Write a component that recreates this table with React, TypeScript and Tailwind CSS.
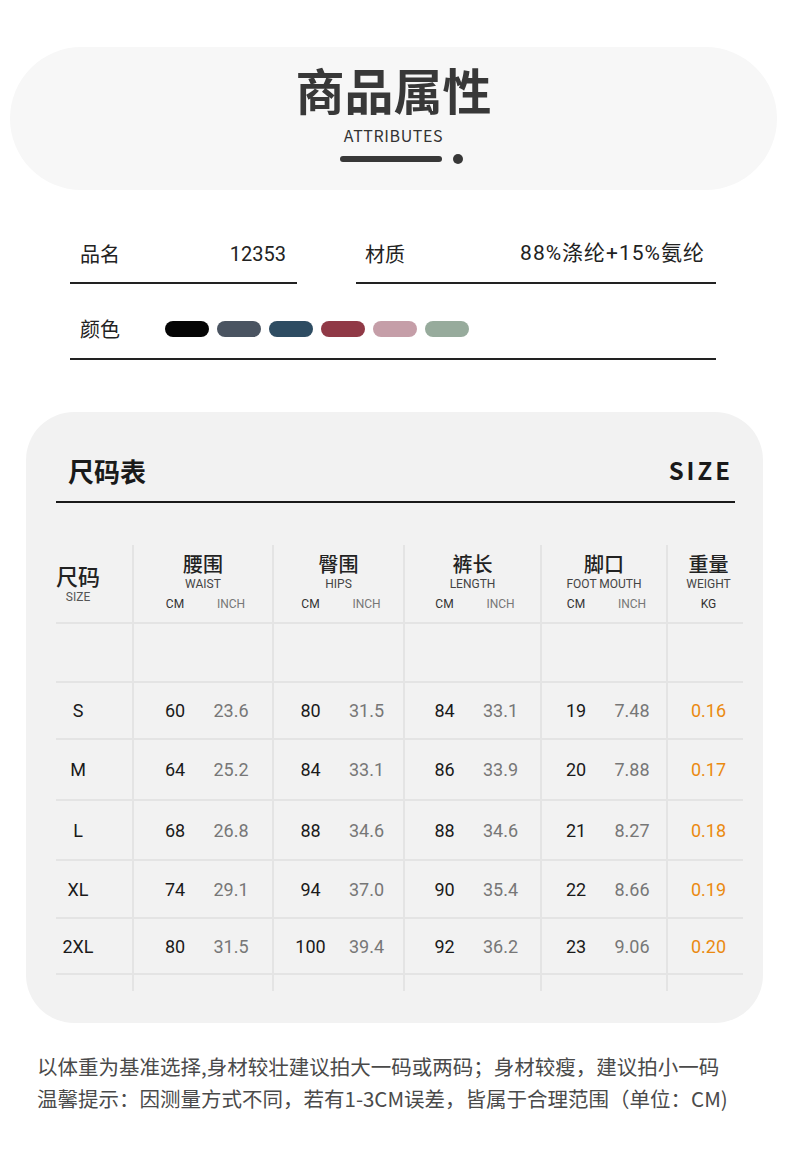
const cjk = "font-['Noto_Sans_CJK_SC',sans-serif]";
const num = "font-['Roboto','Noto_Sans_CJK_SC',sans-serif]";

const swatches = ["#050505", "#4a5461", "#2e4c62", "#903946", "#c59ea8", "#97ab9c"];

const widths = ["w-[76px]", "w-[140px]", "w-[131px]", "w-[137px]", "w-[126px]", "w-[77px]"];

const columns = [
  { zh: "腰围", en: "WAIST" },
  { zh: "臀围", en: "HIPS" },
  { zh: "裤长", en: "LENGTH" },
  { zh: "脚口", en: "FOOT MOUTH" },
];

const rows = [
  { size: "S", h: "h-[57px]", vals: [["60", "23.6"], ["80", "31.5"], ["84", "33.1"], ["19", "7.48"]], kg: "0.16" },
  { size: "M", h: "h-[61px]", vals: [["64", "25.2"], ["84", "33.1"], ["86", "33.9"], ["20", "7.88"]], kg: "0.17" },
  { size: "L", h: "h-[60px]", vals: [["68", "26.8"], ["88", "34.6"], ["88", "34.6"], ["21", "8.27"]], kg: "0.18" },
  { size: "XL", h: "h-[58px]", vals: [["74", "29.1"], ["94", "37.0"], ["90", "35.4"], ["22", "8.66"]], kg: "0.19" },
  { size: "2XL", h: "h-[56px]", vals: [["80", "31.5"], ["100", "39.4"], ["92", "36.2"], ["23", "9.06"]], kg: "0.20" },
];

function Cell({ i, children, className = "" }: { i: number; children?: React.ReactNode; className?: string }) {
  return (
    <div className={`${widths[i]} shrink-0 h-full ${i > 0 ? "border-l-2 border-[#e4e4e4]" : ""} ${className}`}>
      {children}
    </div>
  );
}

function HeaderRow() {
  return (
    <div className="flex h-[79px] border-b-2 border-[#e4e4e4]">
      <Cell i={0} className="pt-[18px]">
        <div className={`${cjk} w-[44px] text-center text-[22px] leading-[24px] font-medium text-[#222]`}>尺码</div>
        <div className={`${num} w-[44px] text-center text-[12px] leading-[14px] mt-[3px] text-[#555]`}>SIZE</div>
      </Cell>
      {columns.map((c, idx) => (
        <Cell key={c.zh} i={idx + 1} className="flex flex-col items-center pt-[8px]">
          <div className={`${cjk} text-[20px] leading-[22px] font-medium text-[#222]`}>{c.zh}</div>
          <div className={`${num} mt-[2px] text-[12px] leading-[14px] text-[#444]`}>{c.en}</div>
          <div className={`${num} flex mt-[6px] text-[12px] leading-[14px]`}>
            <span className="w-[56px] text-center text-[#333]">CM</span>
            <span className="w-[56px] text-center text-[#777]">INCH</span>
          </div>
        </Cell>
      ))}
      <Cell i={5} className="flex flex-col items-center pt-[8px] pl-[6px]">
        <div className={`${cjk} text-[20px] leading-[22px] font-medium text-[#222]`}>重量</div>
        <div className={`${num} mt-[2px] text-[12px] leading-[14px] text-[#444]`}>WEIGHT</div>
        <div className={`${num} mt-[6px] text-[12px] leading-[14px] text-[#333]`}>KG</div>
      </Cell>
    </div>
  );
}

export default function App() {
  return (
    <div className="w-[790px] h-[1149px] bg-white overflow-hidden pt-[47px]">
      {/* title pill */}
      <div className="mx-[10px] w-[767px] h-[143px] rounded-full bg-[#f7f7f7] flex flex-col items-center pt-[17px]">
        <div className={`${cjk} text-[49px] leading-[49px] font-bold text-[#383838]`}>商品属性</div>
        <div className={`${cjk} mt-[14px] text-[16px] leading-[17px] tracking-[0.6px] text-[#333]`}>ATTRIBUTES</div>
        <div className="flex items-center mt-[10px] ml-[16px] gap-[11px]">
          <div className="w-[102px] h-[6px] rounded-full bg-[#383838]" />
          <div className="w-[10px] h-[10px] rounded-full bg-[#383838]" />
        </div>
      </div>

      {/* attributes */}
      <div className="flex mt-[36px] ml-[70px]">
        <div className="w-[227px] h-[58px] flex items-center justify-between pl-[10px] pr-[11px] border-b-2 border-[#222]">
          <span className={`${cjk} text-[20px] text-[#222]`}>品名</span>
          <span className={`${num} text-[20px] text-[#222]`}>12353</span>
        </div>
        <div className="ml-[59px] w-[360px] h-[58px] flex items-center justify-between pl-[9px] pr-[11px] border-b-2 border-[#222]">
          <span className={`${cjk} text-[20px] text-[#222]`}>材质</span>
          <span className={`${num} text-[21px] tracking-[1px] text-[#222]`}>88%涤纶+15%氨纶</span>
        </div>
      </div>
      <div className="ml-[70px] w-[646px] h-[76px] pt-[16px] border-b-2 border-[#222]">
        <div className="h-[58px] flex items-center pl-[10px]">
          <span className={`${cjk} w-[85px] text-[20px] text-[#222]`}>颜色</span>
          <div className="flex gap-[8px]">
            {swatches.map((c) => (
              <div key={c} className="w-[44px] h-[16px] rounded-full" style={{ backgroundColor: c }} />
            ))}
          </div>
        </div>
      </div>

      {/* size chart card */}
      <div className="mt-[52px] ml-[26px] w-[737px] h-[611px] rounded-[48px] bg-[#f2f2f2] pl-[30px] pt-[40px]">
        <div className="w-[679px] h-[36px] flex items-center justify-between pl-[12px] pr-[2px]">
          <span className={`${cjk} text-[26px] font-bold text-[#1a1a1a]`}>尺码表</span>
          <span className={`${cjk} text-[24px] font-bold tracking-[3px] text-[#1a1a1a]`}>SIZE</span>
        </div>
        <div className="w-[679px] h-[2px] bg-[#1a1a1a] mt-[13px]" />

        <div className="mt-[42px] w-[687px]">
          <HeaderRow />
          <div className="flex h-[59px] border-b-2 border-[#e4e4e4]">
            {widths.map((_, i) => (
              <Cell key={i} i={i} />
            ))}
          </div>
          {rows.map((r) => (
            <div key={r.size} className={`flex ${r.h} border-b-2 border-[#e4e4e4]`}>
              <Cell i={0} className="flex items-center">
                <span className={`${num} w-[44px] text-center text-[18px] text-[#1a1a1a]`}>{r.size}</span>
              </Cell>
              {r.vals.map((v, idx) => (
                <Cell key={idx} i={idx + 1} className={`${num} flex items-center justify-center text-[18px]`}>
                  <span className="w-[56px] text-center text-[#1a1a1a]">{v[0]}</span>
                  <span className="w-[56px] text-center text-[#777]">{v[1]}</span>
                </Cell>
              ))}
              <Cell i={5} className={`${num} flex items-center justify-center pl-[6px] text-[18px] text-[#ea8a10]`}>
                {r.kg}
              </Cell>
            </div>
          ))}
          <div className="flex h-[16px]">
            {widths.map((_, i) => (
              <Cell key={i} i={i} />
            ))}
          </div>
        </div>
      </div>

      {/* notes */}
      <div className={`${cjk} mt-[27px] pl-[37px] text-[20.5px] leading-[32px] text-[#4a4a4a] whitespace-nowrap`}>
        <p>以体重为基准选择,身材较壮建议拍大一码或两码；身材较瘦，建议拍小一码</p>
        <p>温馨提示：因测量方式不同，若有1-3CM误差，皆属于合理范围（单位：CM)</p>
      </div>
    </div>
  );
}
